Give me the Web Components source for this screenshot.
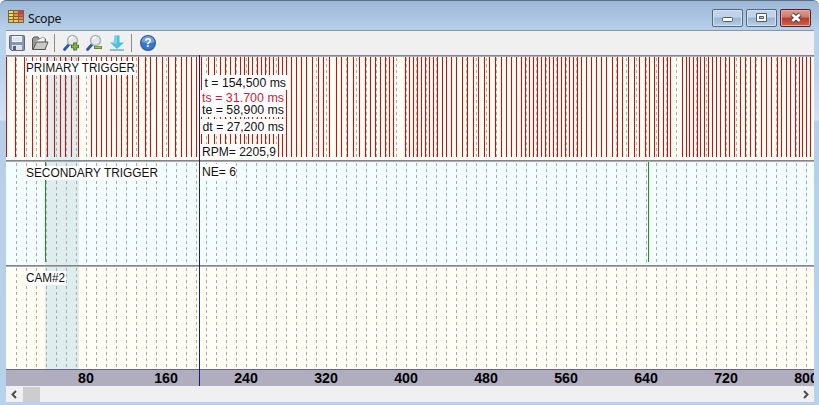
<!DOCTYPE html>
<html lang="en">
<head>
    <meta charset="UTF-8">
    <meta name="viewport" content="width=device-width, initial-scale=1.0">
    <title>Scope</title>
    <style>
        body {
            margin: 0;
            height: 100vh;
            overflow: hidden;
            font-family: "Liberation Sans", Arial, sans-serif;
        }
    </style>
</head>
<body>
    <scope-window caption="Scope">
        <scope-toolbar slot="toolbar"></scope-toolbar>
        <scope-plot>
            <scope-lane kind="primary" label="PRIMARY TRIGGER" label-width="109"></scope-lane>
            <scope-lane kind="secondary" label="SECONDARY TRIGGER" label-width="132"></scope-lane>
            <scope-lane kind="cam" label="CAM#2" label-width="39"></scope-lane>
            <scope-axis></scope-axis>
        </scope-plot>
        <scope-scrollbar slot="scroll"></scope-scrollbar>
    </scope-window>

    <script>
        const PLOT_WIDTH = 808;
        const PLOT_LEFT = 6;

        // window x of every crank tooth edge
        const TEETH = [
            6, 15, 24, 32, 40, 47, 54, 60, 65, 71, 78,
            91, 96, 101, 106, 111, 116, 121, 127, 132, 138, 145, 150, 156, 162, 168, 175, 181, 186, 191, 196,
            201, 208, 214, 220, 225, 230, 235, 240, 244, 248, 252, 257, 261, 265, 269, 273, 278, 282, 286,
            291, 296, 301, 306, 312, 318, 323, 329, 336, 341, 347, 353, 359, 365, 370, 375, 380, 385, 389, 393,
            405, 409, 413, 417, 421, 425, 429, 433, 437, 442, 446, 451, 456, 462, 467, 473, 478, 484, 489, 495,
            501, 506, 511, 516, 521, 525, 529, 533, 537, 541, 545, 549, 553, 557, 561, 565, 569, 573, 577,
            581, 586, 591, 596, 601, 606, 612, 617, 622, 628, 634, 639, 645, 649, 654, 658, 663, 667, 670,
            682, 686, 689, 693, 697, 700, 704, 708, 712, 716, 720, 725, 729, 734, 740, 745, 750, 755,
            761, 766, 771, 777, 781, 786, 790, 795, 799, 802, 806, 810
        ];
        const SECONDARY = [45, 648];

        class ScopeWindow extends HTMLElement {
            constructor() {
                super();
                this.attachShadow({ mode: 'open' });
                this.shadowRoot.innerHTML = `
                    <style>
                        :host {
                            display: flex;
                            flex-direction: column;
                            box-sizing: border-box;
                            height: 100%;
                            padding: 0 5px 3px 6px;
                            border-top: 1px solid #5d7187;
                            border-radius: 6px 6px 0 0;
                            background: linear-gradient(#9db8d6, #a9c3df 14px, #b9d1ea 30px, #bbd2eb 66px, #d4e2f3 119px, #b7cfe8 120px, #bad1ea);
                        }
                        header {
                            display: flex;
                            height: 29px;
                            align-items: flex-start;
                        }
                        .app { margin: 9px 0 0 2px; }
                        h1 {
                            flex: 1;
                            margin: 9px 0 0 4px;
                            font: 12.3px/17px "Noto Sans", sans-serif;
                            letter-spacing: -.3px;
                            color: #111;
                        }
                        .buttons {
                            display: flex;
                            gap: 3px;
                            margin: 8px 3px 0 0;
                        }
                        .buttons span {
                            box-sizing: border-box;
                            display: flex;
                            align-items: center;
                            justify-content: center;
                            width: 31px;
                            height: 18px;
                            border: 1px solid #53677f;
                            border-radius: 2px;
                            box-shadow: inset 0 0 0 1px #d3e2f2;
                            background: linear-gradient(#c0d3e8 45%, #9ab4d0 50%, #b7cfe8);
                        }
                        .buttons .close {
                            border-color: #58202a;
                            box-shadow: inset 0 0 0 1px #e6a79d;
                            background: linear-gradient(#dda096, #cf7769 45%, #b83a28 50%, #cd6350);
                        }
                        main { display: flex; flex-direction: column; flex: 1; min-height: 0; }
                    </style>
                    <header>
                        <svg class="app" width="16" height="13">
                            <rect width="16" height="13" fill="#7a6148"/>
                            <path fill="#d6e95a" d="M1 1h4v2H1z"/><path fill="#f09a48" d="M6 1h4v2H6z"/><path fill="#d93f3f" d="M11 1h4v2h-4z"/>
                            <path fill="#ebe64c" d="M1 4h4v2H1z"/><path fill="#ef8e3c" d="M6 4h4v2H6z"/><path fill="#e55447" d="M11 4h4v2h-4z"/>
                            <path fill="#efd847" d="M1 7h4v2H1z"/><path fill="#f1ae3d" d="M6 7h4v2H6z"/><path fill="#ee7f42" d="M11 7h4v2h-4z"/>
                            <path fill="#f2cb42" d="M1 10h4v2H1zM6 10h4v2H6z"/><path fill="#f2a43f" d="M11 10h4v2h-4z"/>
                        </svg>
                        <h1></h1>
                        <div class="buttons">
                            <span><svg width="14" height="12"><rect x="1.500" y="5.500" width="10" height="4" rx="1" fill="#fff" stroke="#4f5b6b"/></svg></span>
                            <span><svg width="14" height="12"><path fill="#fff" fill-rule="evenodd" stroke="#4f5b6b" d="M1.500 1.500h10v8h-10zM4.500 4.500h4v2h-4z"/></svg></span>
                            <span class="close"><svg width="14" height="12"><path d="M3 2.200l8 7M11 2.200l-8 7" stroke="#4c3c44" stroke-width="4.600"/><path d="M3.300 2.500l7.400 6.400M10.700 2.500l-7.400 6.400" stroke="#fff" stroke-width="2.700"/></svg></span>
                        </div>
                    </header>
                    <main>
                        <slot name="toolbar"></slot>
                        <slot></slot>
                        <slot name="scroll"></slot>
                    </main>
                `;
                this.shadowRoot.querySelector('h1').textContent = this.getAttribute('caption');
            }
        }

        class ScopeToolbar extends HTMLElement {
            constructor() {
                super();
                this.attachShadow({ mode: 'open' });
                this.shadowRoot.innerHTML = `
                    <style>
                        :host {
                            display: flex;
                            box-sizing: border-box;
                            height: 25px;
                            flex: none;
                            align-items: center;
                            padding: 0 0 0 2px;
                            border-top: 1px solid #8596a8;
                            background: #f0f0f0;
                        }
                        svg { width: 18px; height: 18px; }
                        svg + svg { margin-left: 5px; }
                        i { width: 1px; height: 18px; margin: 0 7px 0 5px; background: #8c8c8c; }
                    </style>
                    <svg viewBox="0 0 18 18">
                        <path d="M1.500 2.500q0-1 1-1h13q1 0 1 1v13q0 1-1 1h-12l-2-2z" fill="#8795b2" stroke="#5d6984"/>
                        <path d="M4 2h10v6H4z" fill="#f5f8fb"/><path d="M5 4h8M5 6h8" stroke="#c8d0dc"/>
                        <path d="M4 11h10v5H4z" fill="#dfe3e8"/><path d="M5 12h3v4H5z" fill="#56617b"/>
                    </svg>
                    <svg viewBox="0 0 18 18">
                        <path d="M1.500 15.500v-11l1.500-1.500h4l1.500 2h6v10.500z" fill="#999" stroke="#555"/>
                        <path d="M3 8l9-5 2 1v5z" fill="#f4f4f4" stroke="#888" stroke-width=".7"/>
                        <path d="M2 15.500l3.500-7.500h11.500l-3 7.500z" fill="#c9c9c9" stroke="#555"/>
                    </svg>
                    <i></i>
                    <svg viewBox="0 0 18 18">
                        <path d="M2.500 15.500l4.500-5" stroke="#2c57a3" stroke-width="2.800" stroke-linecap="round"/>
                        <circle cx="10.500" cy="6.500" r="5" fill="#e3e7ea" stroke="#aab0b7" stroke-width="1.400"/>
                        <path d="M7.500 6q.5-3 3.500-3" stroke="#fff" stroke-width="1.500" fill="none"/>
                        <path d="M13 8.500v8M9 12.500h8" stroke="#446e22" stroke-width="3.600"/>
                        <path d="M13 9.500v6M10 12.500h6" stroke="#86b848" stroke-width="1.800"/>
                    </svg>
                    <svg viewBox="0 0 18 18">
                        <path d="M2.500 15.500l4.500-5" stroke="#2c57a3" stroke-width="2.800" stroke-linecap="round"/>
                        <circle cx="10.500" cy="6.500" r="5" fill="#e3e7ea" stroke="#aab0b7" stroke-width="1.400"/>
                        <path d="M7.500 6q.5-3 3.500-3" stroke="#fff" stroke-width="1.500" fill="none"/>
                        <path d="M9 13.500h8" stroke="#5b8a33" stroke-width="3"/>
                        <path d="M10 13.300h6" stroke="#9bc95c" stroke-width="1.300"/>
                    </svg>
                    <svg viewBox="0 0 18 18">
                        <path d="M6.500 1.500h5v7h4.500l-7 6.500-7-6.500h4.500z" fill="#4fbddd"/>
                        <path d="M7 2h2v8H5z" fill="#79d2e8"/>
                        <path d="M2 16h14" stroke="#6faebc" stroke-width="1.500"/>
                    </svg>
                    <i></i>
                    <svg viewBox="0 0 18 18">
                        <circle cx="9" cy="9" r="7.400" fill="#3a76c8" stroke="#315d9f" stroke-width="1.200"/>
                        <path d="M2.500 8a6.500 6 0 0 1 13 0q-6 2.500-13 0z" fill="#6c9ddd"/>
                        <text x="9" y="13.300" text-anchor="middle" font-size="12" font-weight="bold" fill="#fff">?</text>
                    </svg>
                `;
            }
        }

        class ScopePlot extends HTMLElement {
            constructor() {
                super();
                this.attachShadow({ mode: 'open' });
                this.shadowRoot.innerHTML = `
                    <style>
                        :host {
                            position: relative;
                            display: flex;
                            flex-direction: column;
                            height: 331px;
                            flex: none;
                            overflow: hidden;
                        }
                        .overlay { position: absolute; left: 0; top: 0; }
                    </style>
                    <slot></slot>
                    <svg class="overlay" width="${PLOT_WIDTH}" height="331" viewBox="6 55 ${PLOT_WIDTH} 331"></svg>
                `;
                this.renderReadouts();
            }
            renderReadouts() {
                // box x, y, w, h, then text x, baseline, length
                const readouts = [
                    ['t = 154,500 ms', 202, 75, 86, 15, 204.5, 87, 81.5],
                    ['ts = 31.700 ms', 201, 90, 84, 15, 202, 102, 82, '#d01c3c'],
                    ['te = 58,900 ms', 201, 105, 84, 12, 202, 114, 82],
                    ['dt = 27,200 ms', 201, 119, 84, 15, 202.5, 131, 81.5],
                    ['RPM= 2205,9', 201, 144, 76, 14, 202, 156, 74],
                    ['NE= 6', 201, 164, 35, 14, 202, 176, 34]
                ];
                this.shadowRoot.querySelector('.overlay').innerHTML = readouts.map(r => `
                    <rect x="${r[1]}" y="${r[2]}" width="${r[3]}" height="${r[4]}" fill="#fff"/>
                    <text x="${r[5]}" y="${r[6]}" textLength="${r[7]}" lengthAdjust="spacingAndGlyphs"
                        font-size="12.5" fill="${r[8] || '#111'}">${r[0]}</text>
                `).join('') + '<rect x="199" y="55" width="1" height="331" fill="#1c1c78"/>';
            }
        }

        class ScopeLane extends HTMLElement {
            constructor() {
                super();
                this.attachShadow({ mode: 'open' });
                this.render();
            }
            render() {
                const kind = this.getAttribute('kind');
                const width = Number(this.getAttribute('label-width'));
                this.shadowRoot.innerHTML = `
                    <style>
                        :host {
                            display: block;
                            height: 105px;
                            flex: none;
                            background: #fffef5;
                        }
                        :host([kind="secondary"]) { background: #f4feff; }
                        :host([kind="cam"]) { height: 104px; }
                        svg { display: block; }
                    </style>
                    <svg width="${PLOT_WIDTH}" height="105" viewBox="${PLOT_LEFT} 0 ${PLOT_WIDTH} 105" shape-rendering="crispEdges">
                        <rect x="45" y="2" width="34" height="103" fill="#deeeee"/>
                        ${kind === 'primary' ? this.halos() : ''}
                        ${this.grid()}
                        ${this.pulses(kind)}
                        <rect x="6" width="${PLOT_WIDTH}" height="1" fill="#85858b"/>
                        <rect x="6" y="1" width="${PLOT_WIDTH}" height="1" fill="#aaaab0"/>
                        <rect x="26" y="6" width="${width + 1}" height="14" fill="#fff"/>
                        <text x="26" y="17" textLength="${width}" lengthAdjust="spacingAndGlyphs"
                            font-size="12.5" fill="#111"></text>
                    </svg>
                `;
                this.shadowRoot.querySelector('text').textContent = this.getAttribute('label');
            }
            grid() {
                let lines = '';
                for (let x = 16; x < 814; x += 10) {
                    // dashes touching a tooth are tinted
                    const near = this.getAttribute('kind') === 'primary' && TEETH.includes(x + 1);
                    lines += `<path d="M${x + .5} 3V105" stroke="${near ? '#ef9090' : '#aaa'}" stroke-dasharray="3 3"/>`;
                }
                return lines;
            }
            halos() {
                return TEETH.map(x => `<rect x="${x - 1}" y="2" width="3" height="100" fill="#f88" fill-opacity=".12"/>`).join('');
            }
            pulses(kind) {
                if (kind === 'cam') return '';
                const list = kind === 'primary' ? TEETH : SECONDARY;
                const color = kind === 'primary' ? '#b01c1a' : '#1e922c';
                return list.map(x => `<rect x="${x}" y="2" width="1" height="100" fill="${color}"/>`).join('');
            }
        }

        class ScopeAxis extends HTMLElement {
            constructor() {
                super();
                this.attachShadow({ mode: 'open' });
                const cells = [];
                for (let v = 80; v <= 800; v += 80) {
                    cells.push(`<span>${v}</span>`);
                }
                this.shadowRoot.innerHTML = `
                    <style>
                        :host {
                            display: flex;
                            box-sizing: border-box;
                            height: 17px;
                            flex: none;
                            overflow: hidden;
                            padding-left: 40px;
                            border-top: 1px solid #67638c;
                            background: #b0adbf;
                            font: bold 14.2px/16px "Liberation Sans", Arial, sans-serif;
                            color: #000;
                        }
                        span { width: 80px; flex: none; text-align: center; }
                    </style>
                    ${cells.join('')}
                `;
            }
        }

        class ScopeScrollbar extends HTMLElement {
            constructor() {
                super();
                this.attachShadow({ mode: 'open' });
                this.shadowRoot.innerHTML = `
                    <style>
                        :host {
                            display: flex;
                            flex: 1;
                            align-items: center;
                            background: #f0f0f0;
                        }
                        .thumb { width: 17px; height: 15px; background: #cdcdcd; }
                        .track { flex: 1; }
                        path { fill: none; stroke: #4d4d4d; stroke-width: 2; }
                    </style>
                    <svg width="17" height="16"><path d="M10 5L6.500 8.500 10 12"/></svg>
                    <div class="thumb"></div>
                    <div class="track"></div>
                    <svg width="17" height="16"><path d="M7 5l3.500 3.500L7 12"/></svg>
                `;
            }
        }

        customElements.define('scope-window', ScopeWindow);
        customElements.define('scope-toolbar', ScopeToolbar);
        customElements.define('scope-plot', ScopePlot);
        customElements.define('scope-lane', ScopeLane);
        customElements.define('scope-axis', ScopeAxis);
        customElements.define('scope-scrollbar', ScopeScrollbar);
    </script>
</body>
</html>
